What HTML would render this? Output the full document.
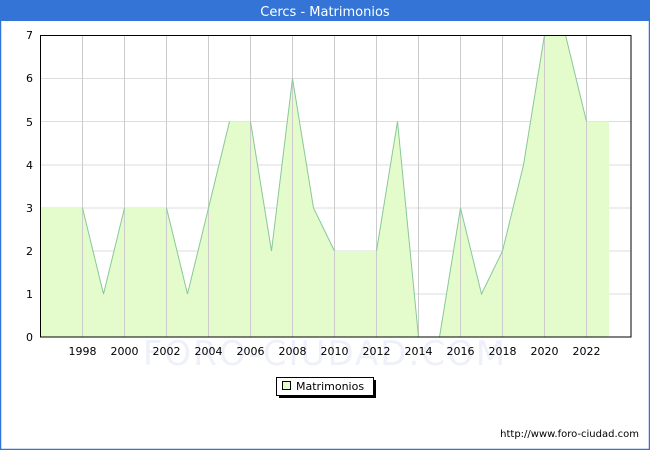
<!DOCTYPE html>
<html><head><meta charset="utf-8"><style>
body{margin:0;width:650px;height:450px;overflow:hidden;background:#fff;font-family:"Liberation Sans","DejaVu Sans",sans-serif}
</style></head><body>
<svg width="650" height="450" xmlns="http://www.w3.org/2000/svg" style="position:absolute;left:0;top:0;font-family:'DejaVu Sans','Liberation Sans',sans-serif">
<rect x="0.5" y="0.5" width="649" height="449" fill="#fff" stroke="#3474d6" stroke-width="1.5"/>
<rect x="0" y="0" width="650" height="21" fill="#3474d6"/>
<text x="325" y="16" text-anchor="middle" fill="#fff" font-size="13">Cercs - Matrimonios</text>
<text x="325" y="365" text-anchor="middle" fill="#eef0fa" font-size="34" letter-spacing="2">FORO-CIUDAD.COM</text>
<g stroke="#dddddd" stroke-width="1">
<line x1="40" y1="294" x2="631" y2="294"/><line x1="40" y1="251" x2="631" y2="251"/><line x1="40" y1="208" x2="631" y2="208"/><line x1="40" y1="165" x2="631" y2="165"/><line x1="40" y1="121.5" x2="631" y2="121.5"/><line x1="40" y1="78.5" x2="631" y2="78.5"/>
</g>
<polygon fill="#e4fccc" points="40.5,208 82.5,208 103.5,294 124.5,208 166.5,208 187.5,294 208.5,208 229.5,121.5 250.5,121.5 271.5,251 292.5,78.5 313.5,208 334.5,251 376.5,251 397.5,121.5 418.5,337 439.5,337 460.5,208 481.5,294 502.5,251 523.5,165 544.5,35 565.5,35 586.5,121.5 609,121.5 609,337 40.5,337"/>
<g stroke="#cccccc" stroke-width="1">
<line x1="82.5" y1="35" x2="82.5" y2="337"/><line x1="124.5" y1="35" x2="124.5" y2="337"/><line x1="166.5" y1="35" x2="166.5" y2="337"/><line x1="208.5" y1="35" x2="208.5" y2="337"/><line x1="250.5" y1="35" x2="250.5" y2="337"/><line x1="292.5" y1="35" x2="292.5" y2="337"/><line x1="334.5" y1="35" x2="334.5" y2="337"/><line x1="376.5" y1="35" x2="376.5" y2="337"/><line x1="418.5" y1="35" x2="418.5" y2="337"/><line x1="460.5" y1="35" x2="460.5" y2="337"/><line x1="502.5" y1="35" x2="502.5" y2="337"/><line x1="544.5" y1="35" x2="544.5" y2="337"/><line x1="586.5" y1="35" x2="586.5" y2="337"/>
</g>
<polyline fill="none" stroke="#88c898" stroke-width="1" points="82.5,208 103.5,294 124.5,208"/>
<polyline fill="none" stroke="#88c898" stroke-width="1" points="166.5,208 187.5,294 208.5,208 229.5,121.5"/>
<polyline fill="none" stroke="#88c898" stroke-width="1" points="250.5,121.5 271.5,251 292.5,78.5 313.5,208 334.5,251"/>
<polyline fill="none" stroke="#88c898" stroke-width="1" points="376.5,251 397.5,121.5 418.5,337"/>
<polyline fill="none" stroke="#88c898" stroke-width="1" points="439.5,337 460.5,208 481.5,294 502.5,251 523.5,165 544.5,35"/>
<polyline fill="none" stroke="#88c898" stroke-width="1" points="565.5,35 586.5,121.5"/>
<rect x="40.5" y="35.5" width="590.5" height="301.5" fill="none" stroke="#000" stroke-width="1"/>
<g font-size="11" fill="#000" text-anchor="end">
<text x="33" y="341">0</text><text x="33" y="298">1</text><text x="33" y="255">2</text><text x="33" y="212">3</text><text x="33" y="169">4</text><text x="33" y="126">5</text><text x="33" y="82">6</text><text x="33" y="39">7</text>
</g>
<g font-size="11" fill="#000" text-anchor="middle">
<text x="82.5" y="355">1998</text><text x="124.5" y="355">2000</text><text x="166.5" y="355">2002</text><text x="208.5" y="355">2004</text><text x="250.5" y="355">2006</text><text x="292.5" y="355">2008</text><text x="334.5" y="355">2010</text><text x="376.5" y="355">2012</text><text x="418.5" y="355">2014</text><text x="460.5" y="355">2016</text><text x="502.5" y="355">2018</text><text x="544.5" y="355">2020</text><text x="586.5" y="355">2022</text>
</g>
<rect x="279" y="380" width="97" height="18" fill="#000"/>
<rect x="276.5" y="377.5" width="97" height="18" fill="#fff" stroke="#000" stroke-width="1"/>
<rect x="282.5" y="381.5" width="8" height="8" fill="#e4fccc" stroke="#000" stroke-width="1"/>
<text x="296" y="390" font-size="11" fill="#000">Matrimonios</text>
<text x="639" y="437" font-size="10" fill="#000" text-anchor="end">http://www.foro-ciudad.com</text>
</svg>
</body></html>
